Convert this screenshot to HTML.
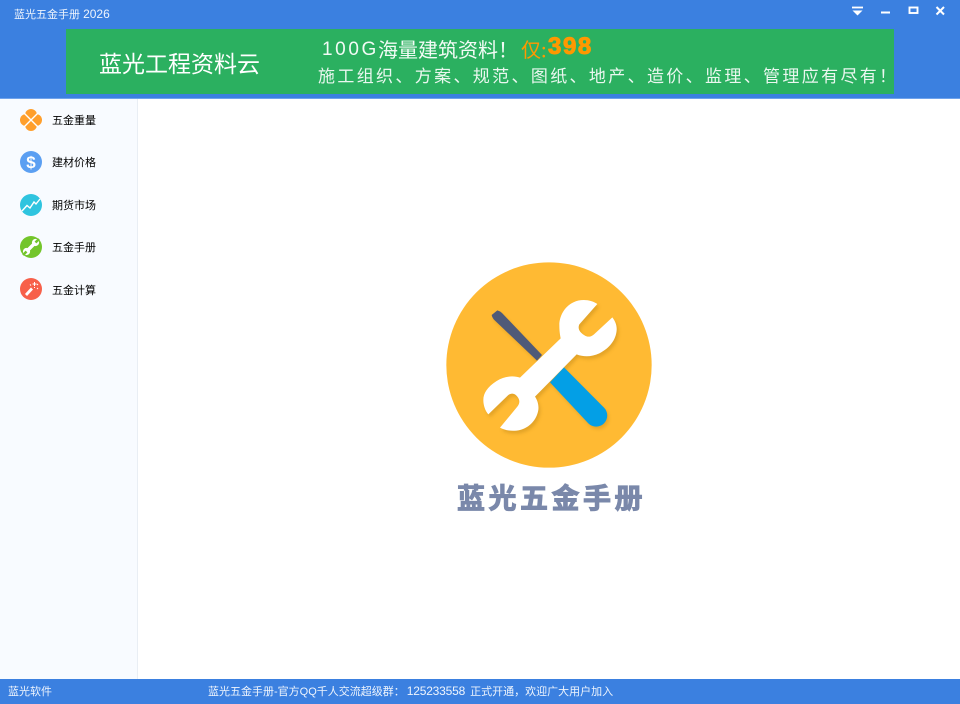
<!DOCTYPE html>
<html lang="zh"><head><meta charset="utf-8"><title>蓝光五金手册 2026</title>
<style>
html,body{margin:0;padding:0;width:960px;height:704px;overflow:hidden;background:#fff}
body{position:relative;font-family:"Liberation Sans","Noto Sans CJK SC",sans-serif;font-size:11px}
div,span,svg{position:absolute}
span{white-space:nowrap;line-height:1}
span i{font-style:normal;font-size:12px}
.n{left:52px;color:#000;font-size:11px;font-family:"Noto Sans CJK SC",sans-serif}
</style></head><body>
<div style="left:0;top:0;width:960px;height:98px;background:#3b80e0"></div>
<div style="left:0;top:98px;width:960px;height:1px;background:#6fa3ec"></div>
<div style="left:0;top:99px;width:137px;height:580px;background:#f8fbff"></div>
<div style="left:137px;top:99px;width:1px;height:580px;background:#e9eef4"></div>
<div style="left:0;top:679px;width:960px;height:25px;background:#3b80e0"></div>

<span style="left:14px;top:8px;color:#eef4fd;font-size:11px">蓝光五金手册 <i>2026</i></span>

<svg style="left:845px;top:0" width="110" height="24" viewBox="845 0 110 24">
<path d="M852 7.5H863" stroke="#fff" stroke-width="1.8"/><path d="M852.5 10.5H862.5L857.5 15.5Z" fill="#fff"/>
<path d="M881 12.5H890" stroke="#fff" stroke-width="2"/>
<rect x="909.5" y="7.5" width="8" height="5.5" fill="none" stroke="#fff" stroke-width="1.9"/>
<path d="M936.5 7L944 14.5M944 7L936.5 14.5" stroke="#fff" stroke-width="2"/>
</svg>

<div style="left:66px;top:29px;width:828px;height:65px;background:#2bb060"></div>
<span style="left:99px;top:51px;color:#fff;font-size:23px;font-family:'Noto Sans CJK SC',sans-serif">蓝光工程资料云</span>
<span style="left:322px;top:40px;color:#f2fbf5;font-size:19px;letter-spacing:2.6px;font-family:'Liberation Sans',sans-serif">100G</span>
<span style="left:378px;top:39px;color:#f2fbf5;font-size:20px;font-family:'Noto Sans CJK SC',sans-serif">海量建筑资料！</span>
<span style="left:521px;top:39px;color:#ff9800;font-size:20px;font-family:'Noto Sans CJK SC',sans-serif">仅:</span>
<span style="left:548px;top:35px;color:#ff9800;font-size:24px;font-weight:700;letter-spacing:1.6px;-webkit-text-stroke:1px #ff9800;font-family:'Liberation Sans',sans-serif">398</span>
<span style="left:318px;top:66px;color:#eaf7ef;font-size:17px;letter-spacing:2.35px;font-family:'Noto Sans CJK SC',sans-serif">施工组织、方案、规范、图纸、地产、造价、监理、管理应有尽有！</span>

<svg style="left:20px;top:109px" width="22" height="22" viewBox="0 0 22 22">
<circle cx="11" cy="6" r="6" fill="#ff9f2c"/><circle cx="11" cy="16" r="6" fill="#ff9f2c"/><circle cx="6" cy="11" r="6" fill="#ff9f2c"/><circle cx="16" cy="11" r="6" fill="#ff9f2c"/>
<path d="M4 4L18 18M18 4L4 18" stroke="#fff" stroke-width="1.4"/>
</svg>
<svg style="left:20px;top:151px" width="22" height="22" viewBox="0 0 22 22">
<circle cx="11" cy="11" r="11" fill="#5b9ff2"/>
<text x="11" y="17" text-anchor="middle" font-family="Liberation Sans" font-weight="700" font-size="17" fill="#fff">$</text>
</svg>
<svg style="left:20px;top:194px" width="22" height="22" viewBox="0 0 22 22">
<circle cx="11" cy="11" r="11" fill="#2fc4df"/>
<path d="M2 17L7 11.5L10 14L14 8L16 10L20 5" fill="none" stroke="#fff" stroke-width="1.4"/>
</svg>
<svg style="left:20px;top:236px" width="22" height="22" viewBox="0 0 22 22">
<circle cx="11" cy="11" r="11" fill="#73c52b"/>
<path d="M7 15L15 7" stroke="#fff" stroke-width="3.4"/>
<circle cx="15.5" cy="6.5" r="3.6" fill="#fff"/><circle cx="6.5" cy="15.5" r="3.6" fill="#fff"/>
<path d="M15.5 6.5L19 3M6.5 15.5L3 19" stroke="#73c52b" stroke-width="2.6"/>
</svg>
<svg style="left:20px;top:278px" width="22" height="22" viewBox="0 0 22 22">
<circle cx="11" cy="11" r="11" fill="#f7604a"/>
<path d="M6 17L12 10.5" stroke="#fff" stroke-width="2.8"/>
<path d="M14.5 4V8M12.5 6H16.5M10 6.5L11 7.5M18 6L17 7M18 11L17 10M14 9.5H15" stroke="#fff" stroke-width="1"/>
</svg>
<span class="n" style="top:115px">五金重量</span>
<span class="n" style="top:157px">建材价格</span>
<span class="n" style="top:200px">期货市场</span>
<span class="n" style="top:242px">五金手册</span>
<span class="n" style="top:285px">五金计算</span>

<svg style="left:440px;top:255px" width="220" height="220" viewBox="0 0 660 660">
<defs><filter id="s" x="-20%" y="-20%" width="140%" height="140%"><feGaussianBlur stdDeviation="5"/></filter></defs>
<circle cx="327" cy="330" r="308" fill="#ffba33"/>
<path d="M155 180L172 166Q180 168 186 174L306 300L291 317L165 197Q157 190 155 180Z M372 337L492 458A33 33 0 0 1 445 505L330 382Z" fill="#c98f1f" opacity=".45" filter="url(#s)" transform="translate(5,8)"/>
<path d="M472 147C455 135 425 130 400 142C372 155 358 185 358 210C358 228 360 240 362 250L240 368C222 362 195 362 170 378C142 396 130 415 130 435C130 452 136 468 145 478L205 420C215 413 225 415 232 425C240 435 240 445 232 455L180 518C195 527 220 530 240 525C268 518 290 495 295 465C297 450 292 435 285 425L410 298C430 306 455 306 478 295C508 280 528 255 530 225C531 210 525 197 517 187L462 238C452 247 442 247 432 240C420 232 412 222 418 208Z" fill="#c98f1f" opacity=".5" filter="url(#s)" transform="translate(6,9)"/>
<path d="M155 180L172 166Q180 168 186 174L306 300L291 317L165 197Q157 190 155 180Z" fill="#4f5a78"/>
<path d="M372 337L492 458A33 33 0 0 1 445 505L330 382Z" fill="#039fe6"/>
<path d="M472 147C455 135 425 130 400 142C372 155 358 185 358 210C358 228 360 240 362 250L240 368C222 362 195 362 170 378C142 396 130 415 130 435C130 452 136 468 145 478L205 420C215 413 225 415 232 425C240 435 240 445 232 455L180 518C195 527 220 530 240 525C268 518 290 495 295 465C297 450 292 435 285 425L410 298C430 306 455 306 478 295C508 280 528 255 530 225C531 210 525 197 517 187L462 238C452 247 442 247 432 240C420 232 412 222 418 208Z" fill="#fff"/>
</svg>

<span style="left:457px;top:483px;color:#7a88aa;font-size:28px;font-weight:700;letter-spacing:3.5px;-webkit-text-stroke:1px #7a88aa;font-family:'Noto Sans CJK SC',sans-serif">蓝光五金手册</span>

<span style="left:8px;top:687px;color:#eef4fd;font-size:11px">蓝光软件</span>
<span style="left:208px;top:685px;color:#eef4fd;font-size:11px">蓝光五金手册-官方QQ千人交流超级群：<i style="letter-spacing:-.2px;margin:0 2px">125233558</i> 正式开通，欢迎广大用户加入</span>
</body></html>
